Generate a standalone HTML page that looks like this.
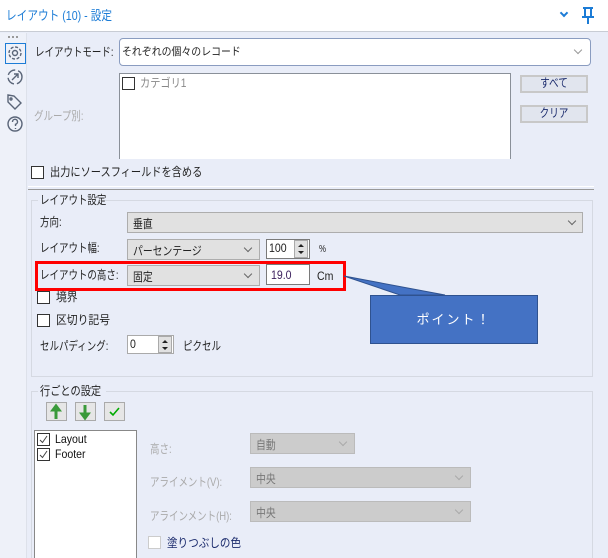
<!DOCTYPE html>
<html><head><meta charset="utf-8"><style>
*{box-sizing:border-box;margin:0;padding:0}
html,body{width:608px;height:558px;overflow:hidden}
body{background:#e9edf8;font-family:"Liberation Sans","Noto Sans CJK JP",sans-serif;font-size:12px;color:#222;position:relative}
.a{position:absolute}
.t{position:absolute;white-space:nowrap;line-height:14px;transform:scaleX(0.79);transform-origin:0 0}
.l{transform:scaleX(0.88)}
.sel{position:absolute;background:#e1e1e1;border:1px solid #adadad}
.sel .v{position:absolute;left:5px;top:2px;white-space:nowrap;transform:scaleX(0.82);transform-origin:0 0}
.chev{position:absolute;width:6px;height:6px;border-right:1px solid #666;border-bottom:1px solid #666;transform:rotate(45deg)}
.cb{position:absolute;width:13px;height:13px;border:1px solid #333;background:#fff}
.in{position:absolute;background:#fff;border:1px solid #7a7a7a}
.btn{position:absolute;background:#e1e5ee;border:2px solid #c8c8c8;color:#1a2a6c;line-height:13px}
.btn span{position:absolute;left:50%;top:0;white-space:nowrap;transform:translateX(-50%) scaleX(0.8)}
.grp{position:absolute;border:1px solid #d5d9e2}
.spin{position:absolute;width:14px;background:#e1e1e1;border:1px solid #aaa}
</style></head><body>
<div class="a" style="left:0;top:0;width:608px;height:32px;background:#fff;border-bottom:1px solid #c8ccd4"></div>
<div class="t" style="left:6px;top:9px;color:#1c7cd6;font-size:13px;transform:scaleX(0.82)">レイアウト (10) - 設定</div>
<div class="chev" style="left:561px;top:10px;border-color:#1c7cd6;border-width:0 2px 2px 0"></div>
<svg class="a" style="left:581px;top:7px" width="14" height="18" viewBox="0 0 14 18"><path d="M2 1H12M4 1V9M10 1V9M1 10H13M7 10V17" stroke="#1c7cd6" stroke-width="2" fill="none"/></svg>
<div class="a" style="left:0;top:33px;width:27px;height:525px;background:#eef1f9;border-right:1px solid #dde1ea"></div>
<div class="a" style="left:8px;top:36px;width:10px;height:2px;border-top:2px dotted #999"></div>
<div class="a" style="left:5px;top:43px;width:21px;height:21px;border:1px solid #1c7cd6"></div>
<svg class="a" style="left:0;top:40px" width="27" height="100" viewBox="0 0 27 100" fill="none" stroke="#5a6578" stroke-width="1.4">
<circle cx="15" cy="13" r="2.5"/><circle cx="15" cy="13" r="6" stroke-dasharray="3 1.7"/>
<circle cx="15" cy="37" r="7" stroke-dasharray="9 3"/><path d="M12 40L18 34M14 34H18V38"/>
<path d="M8 55V62L15 69L21 63L14 56Z"/><circle cx="11" cy="59" r="1"/>
<circle cx="15" cy="84" r="7"/><path d="M12.5 82a2.5 2.5 0 1 1 3 2.3V86M15.5 88V89"/>
</svg>
<div class="t" style="left:35px;top:45px">レイアウトモード:</div>
<div class="a" style="left:119px;top:38px;width:472px;height:28px;background:#fff;border:1px solid #8a9cc0;border-radius:4px"></div>
<div class="t" style="left:122px;top:45px;font-size:11px;transform:scaleX(0.9)">それぞれの個々のレコード</div>
<div class="chev" style="left:575px;top:47px;border-color:#999"></div>
<div class="a" style="left:119px;top:73px;width:392px;height:86px;background:#fff;border:1px solid #8a9099;border-bottom:none"></div>
<div class="cb" style="left:122px;top:77px"></div>
<div class="t" style="left:140px;top:76px;color:#888;transform:scaleX(0.85)">カテゴリ1</div>
<div class="t" style="left:34px;top:109px;color:#aaa">グループ別:</div>
<div class="btn" style="left:520px;top:75px;width:68px;height:18px"><span>すべて</span></div>
<div class="btn" style="left:520px;top:105px;width:68px;height:18px"><span>クリア</span></div>
<div class="cb" style="left:31px;top:166px"></div>
<div class="t" style="left:50px;top:165px;transform:scaleX(0.85)">出力にソースフィールドを含める</div>
<div class="a" style="left:28px;top:186px;width:566px;height:4px;border-top:1px solid #fff;border-bottom:1px solid #999"></div>
<div class="grp" style="left:31px;top:200px;width:562px;height:177px"></div>
<div class="a" style="left:38px;top:194px;width:62px;height:12px;background:#e9edf8"></div>
<div class="t" style="left:40px;top:193px">レイアウト設定</div>
<div class="t" style="left:40px;top:215px">方向:</div>
<div class="sel" style="left:127px;top:212px;width:456px;height:21px"><span class="v">垂直</span><div class="chev" style="right:7px;top:5px"></div></div>
<div class="t" style="left:40px;top:241px">レイアウト幅:</div>
<div class="sel" style="left:127px;top:239px;width:133px;height:21px"><span class="v">パーセンテージ</span><div class="chev" style="right:8px;top:5px"></div></div>
<div class="in" style="left:266px;top:239px;width:44px;height:20px"><span class="t l" style="left:2px;top:1px">100</span></div>
<div class="spin" style="left:294px;top:240px;height:18px"><svg width="12" height="16"><path d="M3 6L6 3L9 6ZM3 10L6 13L9 10Z" fill="#222"/></svg></div>
<div class="t" style="left:319px;top:243px;font-size:10px">%</div>
<div class="t" style="left:40px;top:268px">レイアウトの高さ:</div>
<div class="sel" style="left:127px;top:265px;width:133px;height:21px"><span class="v">固定</span><div class="chev" style="right:8px;top:5px"></div></div>
<div class="in" style="left:266px;top:264px;width:44px;height:21px"><span class="t l" style="left:4px;top:3px;color:#3a1e5c">19.0</span></div>
<div class="t l" style="left:317px;top:269px">Cm</div>
<div class="a" style="left:35px;top:261px;width:311px;height:30px;border:3px solid #f00"></div>
<svg class="a" style="left:340px;top:270px" width="120" height="30"><path d="M4 6L105 25H60Z" fill="#4472c4" stroke="#2f528f" stroke-width="1"/></svg>
<div class="a" style="left:370px;top:295px;width:168px;height:49px;background:#4472c4;border:1px solid #2f528f;color:#fff;text-align:center;line-height:47px;font-size:13px;letter-spacing:2px">ポイント！</div>
<div class="cb" style="left:37px;top:291px"></div>
<div class="t" style="left:56px;top:290px;transform:scaleX(0.9)">境界</div>
<div class="cb" style="left:37px;top:314px"></div>
<div class="t" style="left:56px;top:313px;transform:scaleX(0.9)">区切り記号</div>
<div class="t" style="left:40px;top:339px">セルパディング:</div>
<div class="in" style="left:127px;top:335px;width:47px;height:19px;border-color:#aaa"><span class="t l" style="left:2px;top:1px">0</span></div>
<div class="spin" style="left:158px;top:336px;height:17px"><svg width="12" height="15"><path d="M3 6L6 3L9 6ZM3 10L6 13L9 10Z" fill="#222"/></svg></div>
<div class="t" style="left:183px;top:339px">ピクセル</div>
<div class="grp" style="left:31px;top:391px;width:562px;height:180px"></div>
<div class="a" style="left:38px;top:385px;width:68px;height:12px;background:#e9edf8"></div>
<div class="t" style="left:40px;top:384px;transform:scaleX(0.85)">行ごとの設定</div>
<div class="a" style="left:46px;top:402px;width:21px;height:19px;background:#e6e6e6;border:1px solid #aaa"></div>
<div class="a" style="left:75px;top:402px;width:21px;height:19px;background:#e6e6e6;border:1px solid #aaa"></div>
<div class="a" style="left:104px;top:402px;width:21px;height:19px;background:#e6e6e6;border:1px solid #aaa"></div>
<svg class="a" style="left:46px;top:402px" width="80" height="19"><path d="M10 17V7M10 4L7 8H13Z" stroke="#3a9a3a" stroke-width="3" fill="#3a9a3a"/><path d="M39 3V13M39 16L36 12H42Z" stroke="#3a9a3a" stroke-width="3" fill="#3a9a3a"/><path d="M64 10L67 13L73 6" stroke="#0a0" stroke-width="1.6" fill="none"/></svg>
<div class="a" style="left:34px;top:430px;width:103px;height:130px;background:#fff;border:1px solid #888"></div>
<div class="cb" style="left:37px;top:433px"><svg width="11" height="11"><path d="M2 6L4.5 8.5L9 2" stroke="#444" fill="none"/></svg></div>
<div class="t l" style="left:55px;top:432px;color:#111">Layout</div>
<div class="cb" style="left:37px;top:448px"><svg width="11" height="11"><path d="M2 6L4.5 8.5L9 2" stroke="#444" fill="none"/></svg></div>
<div class="t l" style="left:55px;top:447px;color:#111">Footer</div>
<div class="t" style="left:150px;top:442px;color:#aaa">高さ:</div>
<div class="sel" style="left:250px;top:433px;width:105px;height:21px;background:#ccc;border-color:#bbb;color:#777"><span class="v">自動</span><div class="chev" style="right:8px;top:5px;border-color:#aaa"></div></div>
<div class="t" style="left:150px;top:475px;color:#aaa">アライメント(V):</div>
<div class="sel" style="left:250px;top:467px;width:221px;height:21px;background:#ccc;border-color:#bbb;color:#777"><span class="v">中央</span><div class="chev" style="right:8px;top:5px;border-color:#aaa"></div></div>
<div class="t" style="left:150px;top:509px;color:#aaa">アラインメント(H):</div>
<div class="sel" style="left:250px;top:501px;width:221px;height:21px;background:#ccc;border-color:#bbb;color:#777"><span class="v">中央</span><div class="chev" style="right:8px;top:5px;border-color:#aaa"></div></div>
<div class="cb" style="left:148px;top:536px;border-color:#ccc"></div>
<div class="t" style="left:167px;top:536px;color:#1a2a6c;transform:scaleX(0.88)">塗りつぶしの色</div>
</body></html>
